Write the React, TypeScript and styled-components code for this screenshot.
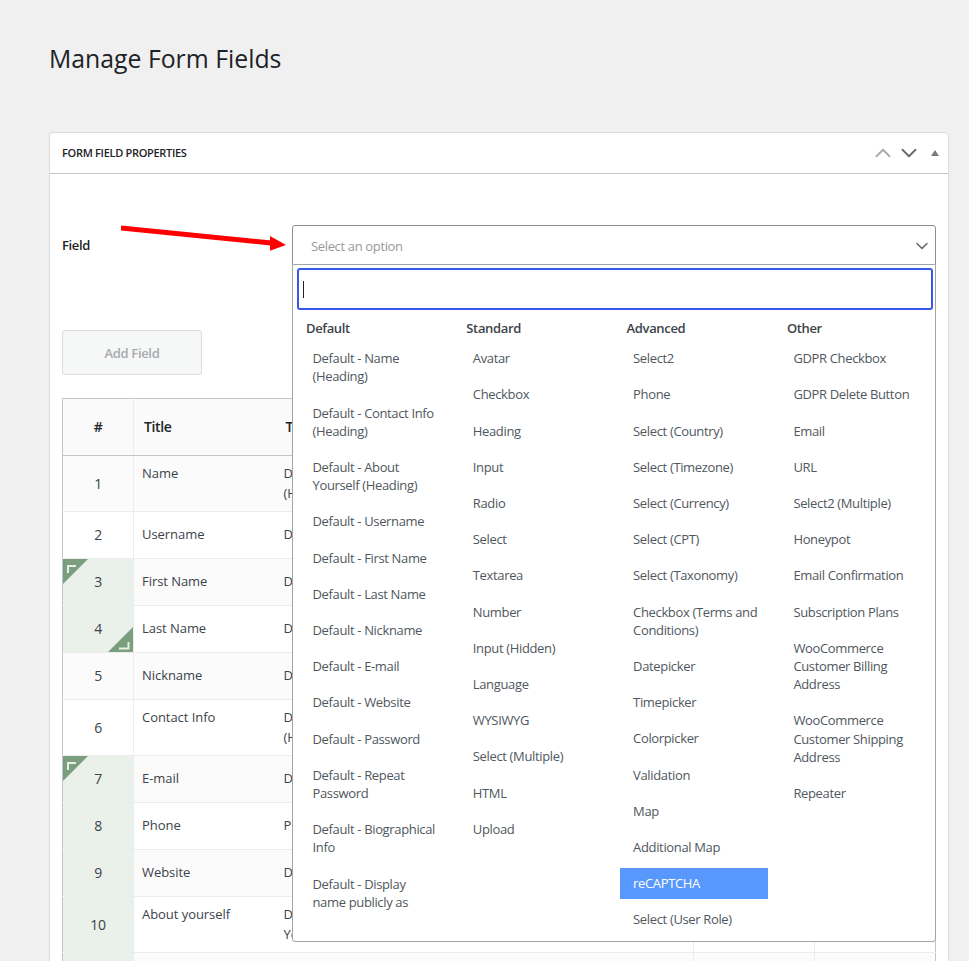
import styled, { createGlobalStyle } from 'styled-components';
import { ChevronDown, ChevronUp } from 'lucide-react';

const GlobalStyle = createGlobalStyle`
  html, body {
    margin: 0;
    height: 961px;
    overflow: hidden;
    background: #f0f0f1;
  }
  body {
    font-family: "Open Sans", "Noto Sans", sans-serif;
    font-size: 13px;
    line-height: 18.2px;
    letter-spacing: -0.35px;
    color: #2c3338;
  }
`;

const Page = styled.div`
  padding: 41px 20px 0 49px;
`;

const Title = styled.h1`
  margin: 0 0 56px;
  font-size: 24.8px;
  font-weight: 400;
  line-height: 35px;
  letter-spacing: 0;
  color: #1d2327;
`;

const Panel = styled.section`
  width: 898px;
  background: #fff;
  border: 1px solid #dcdcde;
  border-radius: 4px 4px 0 0;
`;

const PanelHeader = styled.header`
  display: flex;
  align-items: center;
  height: 40px;
  padding: 0 9px 0 12px;
  border-bottom: 1px solid #c3c4c7;
`;

const PanelTitle = styled.h2`
  flex: 1;
  margin: 0;
  font-size: 11px;
  font-weight: 600;
  letter-spacing: -0.3px;
  color: #1d2327;
`;

const HeaderIcons = styled.div`
  display: flex;
  align-items: center;
`;

const Chevron = styled.span<{ $muted?: boolean }>`
  display: flex;
  color: ${({ $muted }) => ($muted ? '#a7aaad' : '#646970')};
`;

const Triangle = styled.span`
  width: 0;
  height: 0;
  margin-left: 9px;
  border-left: 4px solid transparent;
  border-right: 4px solid transparent;
  border-bottom: 6px solid #787c82;
`;

const PanelBody = styled.div`
  padding: 51px 12px 0;
`;

const FieldRow = styled.div`
  position: relative;
  display: flex;
  align-items: center;
`;

const FieldLabel = styled.label`
  width: 230px;
  font-weight: 600;
  color: #1d2327;
`;

const ArrowMark = styled.svg`
  position: absolute;
  left: 59px;
  top: -2px;
`;

const SelectWrap = styled.div`
  position: relative;
  flex: 1;
  z-index: 2;
`;

const SelectBox = styled.div`
  display: flex;
  align-items: center;
  justify-content: space-between;
  height: 39px;
  box-sizing: content-box;
  padding: 0 3px 0 18px;
  background: #fff;
  border: 1px solid #8c8f94;
  border-radius: 3px 3px 0 0;
  color: #999;
`;

const Placeholder = styled.span`
  padding-top: 2px;
`;

const Dropdown = styled.div`
  position: absolute;
  left: 0;
  right: 0;
  top: 39px;
  height: 678px;
  box-sizing: border-box;
  background: #fff;
  border: 1px solid #a0a5aa;
  border-radius: 0 0 3px 3px;
`;

const SearchBox = styled.div`
  display: flex;
  align-items: center;
  height: 42px;
  box-sizing: border-box;
  margin: 3px 2px 0 4px;
  padding-left: 4px;
  border: 2px solid #3858e9;
  border-radius: 3px;
`;

const Caret = styled.span`
  width: 1px;
  height: 17px;
  background: #1d2327;
`;

const Groups = styled.div`
  display: flex;
  gap: 12.3px;
  padding: 9px 0 0 6.5px;
`;

const Group = styled.div`
  width: 148px;
`;

const GroupLabel = styled.div`
  padding: 0 6.5px 0.5px;
  font-weight: 600;
  color: #3c434a;
`;

const Option = styled.div<{ $active?: boolean }>`
  margin: 5px 0;
  padding: 6.5px 8px 6.5px 13px;
  color: ${({ $active }) => ($active ? '#fff' : '#50575e')};
  background: ${({ $active }) => ($active ? '#5897fb' : 'transparent')};
`;

const AddButton = styled.button`
  display: block;
  width: 140px;
  height: 45px;
  margin: 64px 0 23px;
  padding: 2px 0 0;
  font: inherit;
  font-weight: 600;
  letter-spacing: inherit;
  color: #a7aaad;
  background: #f6f7f7;
  border: 1px solid #dcdcde;
  border-radius: 3px;
`;

const Table = styled.table`
  width: 873px;
  table-layout: fixed;
  border-collapse: collapse;
  border: 1px solid #c3c4c7;
`;

const HeadCell = styled.th<{ $center?: boolean; $lined?: boolean }>`
  height: 57px;
  padding: 0 10px;
  box-sizing: border-box;
  font-size: 14px;
  font-weight: 600;
  color: #1d2327;
  text-align: ${({ $center }) => ($center ? 'center' : 'left')};
  background: #fafafa;
  border-right: ${({ $lined }) => ($lined ? '1px solid #ececec' : '0')};
  border-bottom: 1px solid #c3c4c7;
`;

const Row = styled.tr<{ $odd: boolean; $tall: boolean }>`
  height: ${({ $tall }) => ($tall ? '56px' : '47px')};
  background: ${({ $odd }) => ($odd ? '#fbfbfb' : '#fff')};
`;

const Cell = styled.td<{ $top: boolean; $lined?: boolean }>`
  padding: ${({ $top }) => ($top ? '7px 8px 0' : '0 8px 2px')};
  line-height: 20px;
  letter-spacing: -0.05px;
  vertical-align: ${({ $top }) => ($top ? 'top' : 'middle')};
  color: #3c434a;
  border-right: ${({ $lined }) => ($lined ? '1px solid #ececec' : '0')};
  border-bottom: 1px solid #ececec;
`;

const NumberCell = styled.td<{ $tinted: boolean }>`
  position: relative;
  padding: 0;
  line-height: 20px;
  text-align: center;
  vertical-align: middle;
  font-size: 14px;
  color: #3c434a;
  background: ${({ $tinted }) => ($tinted ? '#eaf1eb' : 'transparent')};
  border-right: 1px solid #ececec;
  border-bottom: 1px solid #ececec;
`;

const Corner = styled.svg<{ $end?: boolean }>`
  position: absolute;
  ${({ $end }) => ($end ? 'right: 0; bottom: 0;' : 'left: 0; top: 0;')}
`;

const COLUMNS = [
  ['#', '71px'],
  ['Title', '142px'],
  ['Type', '146px'],
  ['Meta Name', '272px'],
  ['Required', '121px'],
  ['Actions', '121px'],
];

const ROWS = [
  { title: 'Name', type: 'Default - Name (Heading)', meta: '', tall: true },
  { title: 'Username', type: 'Default - Username', meta: 'username' },
  { title: 'First Name', type: 'Default - First Name', meta: 'first_name', tinted: true, corner: 'start' },
  { title: 'Last Name', type: 'Default - Last Name', meta: 'last_name', tinted: true, corner: 'end' },
  { title: 'Nickname', type: 'Default - Nickname', meta: 'nickname' },
  { title: 'Contact Info', type: 'Default - Contact Info (Heading)', meta: '', tall: true },
  { title: 'E-mail', type: 'Default - E-mail', meta: 'email', tinted: true, corner: 'start' },
  { title: 'Phone', type: 'Phone', meta: 'phone', tinted: true },
  { title: 'Website', type: 'Default - Website', meta: 'website', tinted: true },
  { title: 'About yourself', type: 'Default - About Yourself', meta: '', tall: true, tinted: true },
  { title: 'Biographical Info', type: 'Default - Biographical Info', meta: 'description', tall: true, tinted: true },
];

const GROUPS = [
  {
    label: 'Default',
    options: [
      'Default - Name (Heading)',
      'Default - Contact Info (Heading)',
      'Default - About Yourself (Heading)',
      'Default - Username',
      'Default - First Name',
      'Default - Last Name',
      'Default - Nickname',
      'Default - E-mail',
      'Default - Website',
      'Default - Password',
      'Default - Repeat Password',
      'Default - Biographical Info',
      'Default - Display name publicly as',
    ],
  },
  {
    label: 'Standard',
    options: [
      'Avatar',
      'Checkbox',
      'Heading',
      'Input',
      'Radio',
      'Select',
      'Textarea',
      'Number',
      'Input (Hidden)',
      'Language',
      'WYSIWYG',
      'Select (Multiple)',
      'HTML',
      'Upload',
    ],
  },
  {
    label: 'Advanced',
    options: [
      'Select2',
      'Phone',
      'Select (Country)',
      'Select (Timezone)',
      'Select (Currency)',
      'Select (CPT)',
      'Select (Taxonomy)',
      'Checkbox (Terms and Conditions)',
      'Datepicker',
      'Timepicker',
      'Colorpicker',
      'Validation',
      'Map',
      'Additional Map',
      'reCAPTCHA',
      'Select (User Role)',
    ],
  },
  {
    label: 'Other',
    options: [
      'GDPR Checkbox',
      'GDPR Delete Button',
      'Email',
      'URL',
      'Select2 (Multiple)',
      'Honeypot',
      'Email Confirmation',
      'Subscription Plans',
      'WooCommerce Customer Billing Address',
      'WooCommerce Customer Shipping Address',
      'Repeater',
    ],
  },
];

const CornerMark = ({ end }: { end?: boolean }) => (
  <Corner $end={end} width="25" height="25" viewBox="0 0 25 25">
    {end ? (
      <>
        <path d="M25 0V25H0Z" fill="#7a9e7e" />
        <path d="M20.5 15V21.5H11" fill="none" stroke="#e8efe8" strokeWidth="2" />
      </>
    ) : (
      <>
        <path d="M0 0H25L0 25Z" fill="#7a9e7e" />
        <path d="M5 14V7H13" fill="none" stroke="#e8efe8" strokeWidth="2" />
      </>
    )}
  </Corner>
);

const App = () => {
  return (
    <Page>
      <GlobalStyle />
      <Title>Manage Form Fields</Title>
      <Panel>
        <PanelHeader>
          <PanelTitle>FORM FIELD PROPERTIES</PanelTitle>
          <HeaderIcons>
            <Chevron $muted>
              <ChevronUp size={26} strokeWidth={1.7} />
            </Chevron>
            <Chevron>
              <ChevronDown size={26} strokeWidth={1.7} />
            </Chevron>
            <Triangle />
          </HeaderIcons>
        </PanelHeader>
        <PanelBody>
          <FieldRow>
            <FieldLabel>Field</FieldLabel>
            <ArrowMark width="170" height="30" viewBox="0 0 170 30">
              <path d="M0 5L150 20" stroke="#f00" strokeWidth="5" />
              <path d="M149 13L165 22L149 27.7Z" fill="#f00" />
            </ArrowMark>
            <SelectWrap>
              <SelectBox>
                <Placeholder>Select an option</Placeholder>
                <Chevron>
                  <ChevronDown size={20} strokeWidth={1.9} />
                </Chevron>
              </SelectBox>
              <Dropdown>
                <SearchBox>
                  <Caret />
                </SearchBox>
                <Groups>
                  {GROUPS.map((group) => (
                    <Group key={group.label}>
                      <GroupLabel>{group.label}</GroupLabel>
                      {group.options.map((option) => (
                        <Option key={option} $active={option === 'reCAPTCHA'}>
                          {option}
                        </Option>
                      ))}
                    </Group>
                  ))}
                </Groups>
              </Dropdown>
            </SelectWrap>
          </FieldRow>
          <AddButton>Add Field</AddButton>
          <Table>
            <colgroup>
              {COLUMNS.map(([name, width]) => (
                <col key={name} style={{ width }} />
              ))}
            </colgroup>
            <thead>
              <tr>
                {COLUMNS.map(([name], i) => (
                  <HeadCell key={name} $center={i === 0} $lined={i === 0 || i > 2}>
                    {name}
                  </HeadCell>
                ))}
              </tr>
            </thead>
            <tbody>
              {ROWS.map((row, i) => (
                <Row key={row.title} $odd={i % 2 === 0} $tall={!!row.tall}>
                  <NumberCell $tinted={!!row.tinted}>
                    {row.corner && <CornerMark end={row.corner === 'end'} />}
                    {i + 1}
                  </NumberCell>
                  <Cell $top={!!row.tall}>{row.title}</Cell>
                  <Cell $top={!!row.tall}>{row.type}</Cell>
                  <Cell $top={!!row.tall} $lined>{row.meta}</Cell>
                  <Cell $top={!!row.tall} $lined />
                  <Cell $top={!!row.tall} />
                </Row>
              ))}
            </tbody>
          </Table>
        </PanelBody>
      </Panel>
    </Page>
  );
};

export default App;
